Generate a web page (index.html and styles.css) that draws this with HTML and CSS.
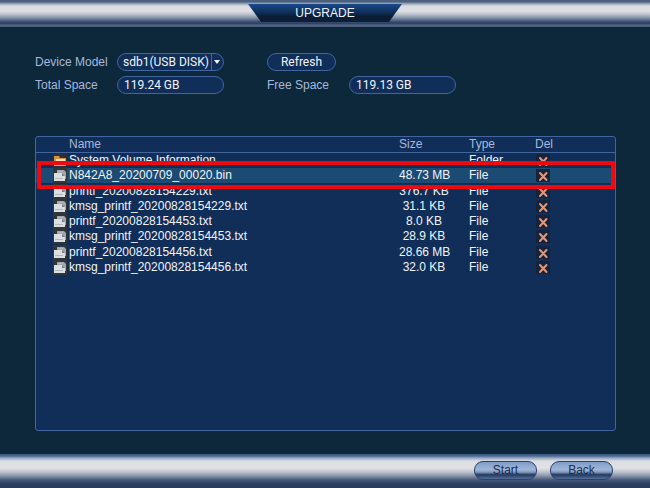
FILE: index.html
```
<!DOCTYPE html>
<html lang="en">
<head>
<meta charset="utf-8">
<title>Upgrade</title>
<link rel="stylesheet" href="styles.css">
</head>
<body>
<svg class="sprite" aria-hidden="true">
  <symbol id="file" viewBox="0 0 14 15">
    <rect width="14" height="15" fill="#30353a"/>
    <path d="M4 2h7l2 2v7H4z" fill="#a2a6ab"/>
    <path d="M1 5h8l3 3v5H1z" fill="#dcdee0"/>
    <path d="M9 5v3h3z" fill="#777d84"/>
    <path d="M5 3.5h5M2 10.500h8" stroke="#b5b9be"/>
  </symbol>
  <symbol id="folder" viewBox="0 0 14 15">
    <rect width="14" height="15" fill="#2b3038"/>
    <path d="M1 3h5l1 2h6v8H1z" fill="#d8923c"/>
    <path d="M3 6h9v3H3z" fill="#f6e3bd"/>
    <path d="M1 13l2-5h11l-2 5z" fill="#efae55"/>
  </symbol>
  <symbol id="cross" viewBox="0 0 14 15">
    <rect y="1" width="14" height="13" fill="#15243a"/>
    <path d="M4 5l6.500 7M10.500 5L4 12" stroke="#e8967a" stroke-width="2" stroke-linecap="round"/>
  </symbol>
</svg>
<header class="titlebar"><h1 class="title">UPGRADE</h1></header>
<main class="content">
  <form class="device">
    <label for="model">Device Model</label>
    <div class="picker">
      <select id="model" class="field"><option>sdb1(USB DISK)</option></select>
      <span class="arrow"></span>
    </div>
    <button type="button" class="field refresh">Refresh</button>
    <label for="total" class="newline">Total Space</label>
    <input id="total" class="field" value="119.24 GB" readonly>
    <label for="free">Free Space</label>
    <input id="free" class="field" value="119.13 GB" readonly>
  </form>
  <section class="list">
    <table class="files">
      <thead>
        <tr><th class="name">Name</th><th class="size">Size</th><th class="type">Type</th><th class="del">Del</th></tr>
      </thead>
      <tbody>
        <tr><td class="name"><svg class="icon"><use href="#folder"/></svg>System Volume Information</td><td class="size"></td><td>Folder</td><td><button class="remove" aria-label="Delete"><svg class="icon"><use href="#cross"/></svg></button></td></tr>
        <tr class="selected"><td class="name"><svg class="icon"><use href="#file"/></svg>N842A8_20200709_00020.bin<span class="highlight"></span></td><td class="size">48.73 MB</td><td>File</td><td><button class="remove" aria-label="Delete"><svg class="icon"><use href="#cross"/></svg></button></td></tr>
        <tr><td class="name"><svg class="icon"><use href="#file"/></svg>printf_20200828154229.txt</td><td class="size">376.7 KB</td><td>File</td><td><button class="remove" aria-label="Delete"><svg class="icon"><use href="#cross"/></svg></button></td></tr>
        <tr><td class="name"><svg class="icon"><use href="#file"/></svg>kmsg_printf_20200828154229.txt</td><td class="size">31.1 KB</td><td>File</td><td><button class="remove" aria-label="Delete"><svg class="icon"><use href="#cross"/></svg></button></td></tr>
        <tr><td class="name"><svg class="icon"><use href="#file"/></svg>printf_20200828154453.txt</td><td class="size">8.0 KB</td><td>File</td><td><button class="remove" aria-label="Delete"><svg class="icon"><use href="#cross"/></svg></button></td></tr>
        <tr><td class="name"><svg class="icon"><use href="#file"/></svg>kmsg_printf_20200828154453.txt</td><td class="size">28.9 KB</td><td>File</td><td><button class="remove" aria-label="Delete"><svg class="icon"><use href="#cross"/></svg></button></td></tr>
        <tr><td class="name"><svg class="icon"><use href="#file"/></svg>printf_20200828154456.txt</td><td class="size">28.66 MB</td><td>File</td><td><button class="remove" aria-label="Delete"><svg class="icon"><use href="#cross"/></svg></button></td></tr>
        <tr><td class="name"><svg class="icon"><use href="#file"/></svg>kmsg_printf_20200828154456.txt</td><td class="size">32.0 KB</td><td>File</td><td><button class="remove" aria-label="Delete"><svg class="icon"><use href="#cross"/></svg></button></td></tr>
      </tbody>
    </table>
  </section>
</main>
<footer class="actions">
  <button class="action">Start</button>
  <button class="action">Back</button>
</footer>
</body>
</html>
```
FILE: styles.css
```
* { box-sizing: border-box; }

body {
  margin: 0;
  min-height: 100vh;
  display: flex;
  flex-direction: column;
  background: #0d283b;
  color: #f0f4fa;
  font: 12px/15px "Liberation Sans", Arial, sans-serif;
}

button, input, select { font: inherit; color: inherit; margin: 0; }

.sprite { position: absolute; width: 0; height: 0; }

.titlebar {
  height: 27px;
  padding-top: 4px;
  display: flex;
  justify-content: center;
  align-items: flex-start;
  background: linear-gradient(#4b617d 0, #4b617d 2px, #8292a8 3px, #d9dce0 6px, #dfe0e3 11px, #c0c6d0 14px, #8290a5 18px, #34496b 22px, #2c4263 24px, #5a6d88 25px, #42566f 27px);
}

.title {
  margin: 0;
  width: 154px;
  height: 18px;
  font-size: 12px;
  font-weight: normal;
  line-height: 18px;
  text-align: center;
  background: linear-gradient(#194a8b, #0e2c54 50%, #0b1c33 70%, #0c2036);
  clip-path: polygon(0 0, 100% 0, calc(100% - 13px) 100%, 13px 100%);
}

.content {
  flex: 1;
  display: flex;
  flex-direction: column;
  gap: 42px;
  padding: 26px 34px 23px 35px;
}

.device {
  display: grid;
  grid-template-columns: 82px 150px 82px 107px;
  row-gap: 5px;
  align-items: center;
}

.device label { color: #a6b9dc; }
.newline { grid-column: 1; }

.field {
  width: 107px;
  height: 18px;
  padding: 0 6px;
  border: 1px solid #41659f;
  border-radius: 9px;
  background: #102e58;
  font-family: Roboto, "Liberation Sans", sans-serif;
  line-height: 16px;
}

.picker { position: relative; width: 107px; height: 18px; }
.picker .field { appearance: none; padding: 0 0 0 5px; display: block; }

.arrow {
  position: absolute;
  top: 1px;
  right: 1px;
  width: 12px;
  height: 16px;
  border-left: 1px solid #41659f;
  pointer-events: none;
}

.arrow::before {
  content: "";
  position: absolute;
  top: 6px;
  left: 2px;
  border: 3px solid transparent;
  border-top: 4px solid #f0f4fa;
  border-bottom: 0;
}

.refresh { width: 69px; padding: 0; }

.list {
  flex: 1;
  border: 1px solid #41659f;
  border-radius: 3px;
  background: #102e58;
}

.files {
  width: 100%;
  height: 138px;
  table-layout: fixed;
  border-collapse: collapse;
}

th, td {
  height: 15px;
  padding: 0;
  line-height: 15px;
  text-align: left;
  white-space: nowrap;
}

thead th {
  color: #a6b9dc;
  font-weight: normal;
  border-bottom: 1px solid #41659f;
}

.name { padding-left: 17px; }
th.name { padding-left: 33px; }
.size { width: 70px; }
td.size { padding-right: 20px; text-align: center; }
.type { width: 66px; }
.del { width: 80px; }

.icon {
  width: 14px;
  height: 15px;
  margin-right: 2px;
  display: inline-block;
  vertical-align: top;
}

.remove {
  display: block;
  padding: 0 1px;
  height: 15px;
  border: 0;
  background: none;
}

.selected { position: relative; background: #1b4a72; }

.highlight {
  position: absolute;
  inset: -7px 0 -6px 1px;
  border: 4px solid #ee0810;
}

.actions {
  height: 34px;
  padding: 7px 37px 0;
  display: flex;
  justify-content: flex-end;
  gap: 13px;
  background: linear-gradient(#3b5679 0, #4a6794 2px, #94a7c4 4px, #dcdde2 7px, #e2e1e5 14px, #bcc3cf 18px, #8793a9 22px, #445879 26px, #2b3e5f 30px, #2b3b58);
}

.action {
  width: 63px;
  height: 19px;
  padding: 0;
  border: 1px solid #2b426b;
  border-radius: 9px;
  color: #1a2d50;
  line-height: 17px;
  background: linear-gradient(#7f9cc8, #9fb6d8 45%, #7e97bb 60%, #24395c 75%, #55709c);
}
```
